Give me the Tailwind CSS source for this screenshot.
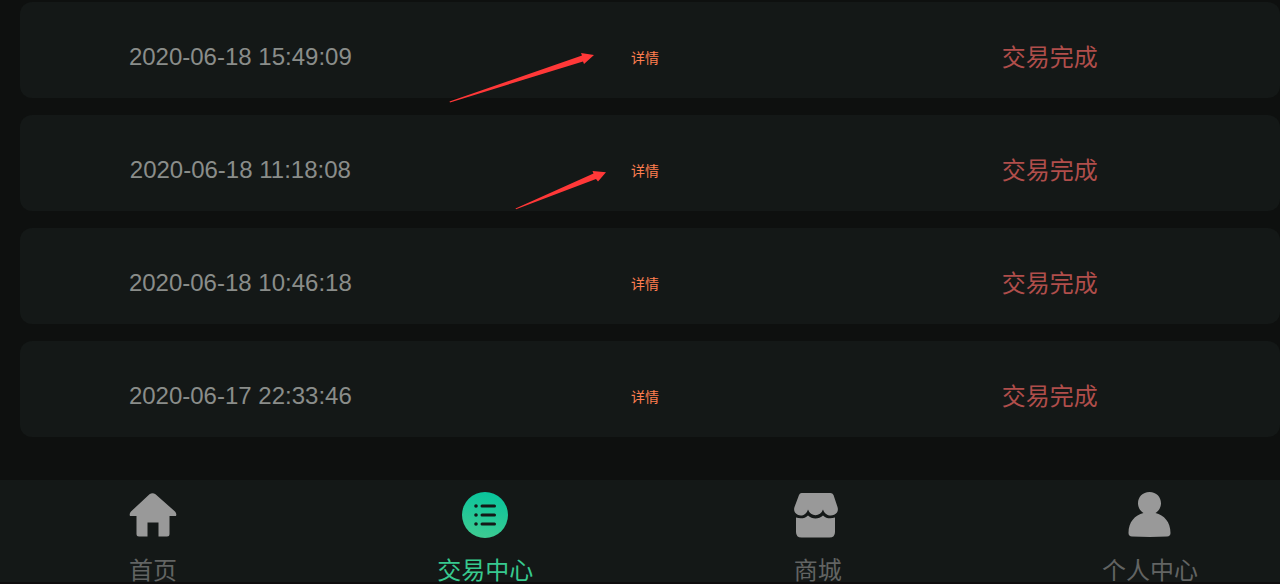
<!DOCTYPE html>
<html lang="zh-CN">
<head>
<meta charset="utf-8">
<meta name="viewport" content="width=device-width, initial-scale=1">
<title>交易中心</title>
<script src="https://cdn.jsdelivr.net/npm/@tailwindcss/browser@4"></script>
</head>
<body class="relative flex min-h-screen flex-col overflow-hidden bg-[#0e100f] font-['Liberation_Sans','Noto_Sans_CJK_SC',sans-serif] text-2xl">
<main class="flex-1 pt-0.5 pl-5">
  <ul class="flex flex-col gap-[17px]">
    <li class="grid h-24 grid-cols-3 items-center rounded-xl bg-[#141817] pt-4 pr-7 pl-[18px] text-center">
      <time class="pb-0.5 text-[#8a8d8a]">2020-06-18 15:49:09</time>
      <a href="#" class="text-sm text-[#ff7f50]">详情</a>
      <span class="text-[#b04e4b]">交易完成</span>
    </li>
    <li class="grid h-24 grid-cols-3 items-center rounded-xl bg-[#141817] pt-4 pr-7 pl-[18px] text-center">
      <time class="pb-0.5 text-[#8a8d8a]">2020-06-18 11:18:08</time>
      <a href="#" class="text-sm text-[#ff7f50]">详情</a>
      <span class="text-[#b04e4b]">交易完成</span>
    </li>
    <li class="grid h-24 grid-cols-3 items-center rounded-xl bg-[#141817] pt-4 pr-7 pl-[18px] text-center">
      <time class="pb-0.5 text-[#8a8d8a]">2020-06-18 10:46:18</time>
      <a href="#" class="text-sm text-[#ff7f50]">详情</a>
      <span class="text-[#b04e4b]">交易完成</span>
    </li>
    <li class="grid h-24 grid-cols-3 items-center rounded-xl bg-[#141817] pt-4 pr-7 pl-[18px] text-center">
      <time class="pb-0.5 text-[#8a8d8a]">2020-06-17 22:33:46</time>
      <a href="#" class="text-sm text-[#ff7f50]">详情</a>
      <span class="text-[#b04e4b]">交易完成</span>
    </li>
  </ul>
</main>
<nav class="flex h-[104px] justify-between border-b-2 border-[#0e0c0d] bg-[#141817] pt-[11px] pr-[82px] pl-[129px] text-[#626463]">
  <a href="#" class="flex flex-col items-center gap-4">
    <svg class="size-12 shrink-0" viewBox="0 0 48 48" fill="#999" aria-hidden="true"><path d="M20.500 3.300Q23.500 1 26.500 3.300L46 20.500Q48 22.500 47 25H40.500V43Q40.500 45.500 38 45.500H29.500V31.500H18.500V45.500H10Q7.500 45.500 7.500 43V25H1Q0 22.500 2 20.500Z"/></svg>
    <span class="leading-8">首页</span>
  </a>
  <a href="#" aria-current="page" class="flex flex-col items-center gap-4 text-[#37c98f]">
    <svg class="size-12 shrink-0" viewBox="0 0 48 48" aria-hidden="true">
      <defs><linearGradient id="g" x1=".6" y1="0" x2=".4" y2="1"><stop stop-color="#08c49c"/><stop offset="1" stop-color="#3ecb92"/></linearGradient></defs>
      <circle cx="24" cy="24" r="23" fill="url(#g)"/>
      <g stroke="#141817" stroke-width="3" stroke-linecap="round"><path d="M21 15H33.500M21 24H33.500M21 33H33.500"/><path stroke-width="3.600" d="M15 15h.01M15 24h.01M15 33h.01"/></g>
    </svg>
    <span class="leading-8">交易中心</span>
  </a>
  <a href="#" class="flex flex-col items-center gap-4">
    <svg class="size-12 shrink-0" viewBox="1.500 0 48 48" fill="#999" aria-hidden="true"><path d="M9 2H38Q40 2 41 4L45 16Q46 19 44.500 21.500C41 26 33 26 30.500 18.500C28 26 18 26 15.500 18.500C13 26 6 26 2.500 21.500Q1 19 2 16L6.500 4Q7.300 2 9 2Z"/><path d="M3.500 26.500C8 28 12.500 27.500 15.500 24.500C19.500 28.500 26.500 28.500 30.500 24.500C33.500 27.500 38 28 42.500 26.500V41Q42.500 46.500 37 46.500H9Q3.500 46.500 3.500 41Z"/></svg>
    <span class="leading-8">商城</span>
  </a>
  <a href="#" class="flex flex-col items-center gap-4">
    <svg class="size-12 shrink-0" viewBox="0 0 48 48" fill="#999" aria-hidden="true"><path d="M23.500 1C30.500 1 35 6 35 12.300C35 16 33 20 29.500 22C38 24 44.500 31 44.500 42Q44.500 45.300 41 45.500Q24 46.300 6 45.500Q2.500 45.300 2.500 42C2.500 31 9 24 17.500 22C14 20 12 16 12 12.300C12 6 16.500 1 23.500 1Z"/></svg>
    <span class="leading-8">个人中心</span>
  </a>
</nav>
<svg class="pointer-events-none absolute top-0 left-0" width="640" height="220" viewBox="0 0 640 220" fill="#ff3838" aria-hidden="true">
  <path d="M449.500 101.500L582 55.500L581 53L594 55L584 64L583 61.500L450 102.500Z"/>
  <path d="M515.500 208.500L593.500 173.500L592.500 171L606 172.300L598 181.500L596 179L516 209.300Z"/>
</svg>
</body>
</html>
